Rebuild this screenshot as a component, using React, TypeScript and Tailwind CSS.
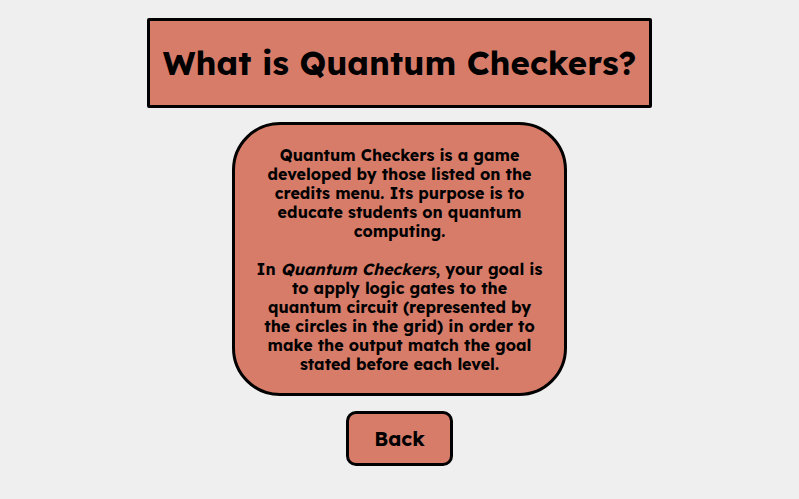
export default function App() {
  return (
    <main className="flex min-h-screen flex-col items-center bg-[#efefef] pt-[18px] font-['Lexend','Inter','Noto_Sans',sans-serif] font-bold text-black">
      <h1 className="flex h-[90px] items-center rounded-[2px] border-3 border-black bg-[#d77c69] px-[13px] text-[33px] leading-[44px] font-bold whitespace-nowrap">
        What is Quantum Checkers?
      </h1>
      <section className="mt-[14px] w-[335px] rounded-[48px] border-3 border-black bg-[#d77c69] px-[18px] pt-[21px] pb-[19px] text-center text-[16px] leading-[19px]">
        <p>
          Quantum Checkers is a game<br />
          developed by those listed on the<br />
          credits menu. Its purpose is to<br />
          educate students on quantum<br />
          computing.
        </p>
        <p className="mt-[19px]">
          In <em>Quantum Checkers</em>, your goal is<br />
          to apply logic gates to the<br />
          quantum circuit (represented by<br />
          the circles in the grid) in order to<br />
          make the output match the goal<br />
          stated before each level.
        </p>
      </section>
      <button type="button" className="mt-[15px] h-[55px] w-[107px] rounded-[10px] border-3 border-black bg-[#d77c69] text-[20px] leading-[25px] font-bold">
        Back
      </button>
    </main>
  );
}
